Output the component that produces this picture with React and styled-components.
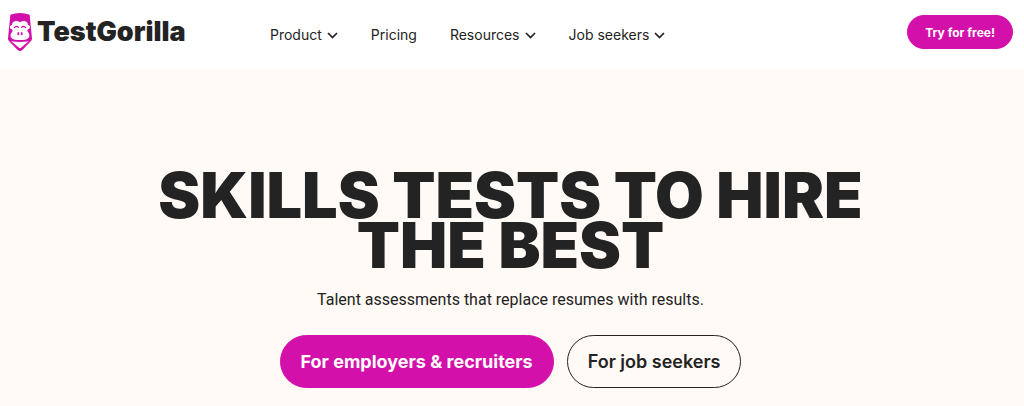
import styled, { createGlobalStyle } from 'styled-components'

const GlobalStyle = createGlobalStyle`
  * {
    box-sizing: border-box;
  }

  body {
    margin: 0;
    min-height: 100vh;
    background: #fffaf6;
    color: #232323;
    font-family: Inter, "Liberation Sans", sans-serif;
  }
`

const Header = styled.header`
  display: flex;
  align-items: center;
  height: 69px;
  padding: 0 11px 5px 8px;
  background: #fff;
`

const Brand = styled.a`
  display: flex;
  align-items: center;
  gap: 5px;
  width: 262px;
  color: #232323;
  font-size: 27px;
  font-weight: 900;
  line-height: 38px;
  text-decoration: none;

  svg {
    flex: none;
  }
`

const Nav = styled.nav`
  display: flex;
  align-items: center;
  gap: 33px;
  margin-right: auto;
  padding-top: 5px;
`

const NavItem = styled.button`
  display: flex;
  align-items: center;
  gap: 5px;
  padding: 0;
  border: 0;
  background: none;
  color: #232323;
  font: 400 14px/20px Inter, "Liberation Sans", sans-serif;
  text-decoration: none;
  cursor: pointer;
`

const PillLink = styled.a`
  display: flex;
  align-items: center;
  justify-content: center;
  height: ${({ $small }) => ($small ? '34px' : '53px')};
  padding: 0 ${({ $small }) => ($small ? '17px' : '20px')};
  border: 1px solid ${({ $outline }) => ($outline ? '#232323' : '#d410aa')};
  border-radius: 27px;
  background: ${({ $outline }) => ($outline ? 'transparent' : '#d410aa')};
  color: ${({ $outline }) => ($outline ? '#232323' : '#fff')};
  font-size: ${({ $small }) => ($small ? '12px' : '18px')};
  font-weight: ${({ $outline }) => ($outline ? 600 : 700)};
  text-decoration: none;
  white-space: nowrap;
`

const Hero = styled.main`
  display: flex;
  flex-direction: column;
  align-items: center;
  padding: 101px 16px 18px 13px;
  text-align: center;
`

const Title = styled.h1`
  max-width: 760px;
  margin: 0;
  font-size: 63px;
  font-weight: 900;
  line-height: 50px;
  text-transform: uppercase;
`

const Subtitle = styled.p`
  margin: 18px 0 23px;
  font-family: Roboto, "Liberation Sans", sans-serif;
  font-size: 16px;
  line-height: 24px;
`

const Actions = styled.div`
  display: flex;
  flex-wrap: wrap;
  justify-content: center;
  gap: 13px;
`

function GorillaMark() {
  return (
    <svg width="24" height="38" viewBox="0 0 72 114" aria-hidden="true">
      <path
        d="M7 5Q36-5 65 5L72 77Q72 81 69 84L44 110Q36 118 28 110L3 84Q0 81 0 77Z"
        fill="#d410aa"
      />
      <path
        d="M36 28C26 20 12 24 12 36C4 36 4 48 12 49C14 52 15 54 12 57C4 66 7 78 21 80Q36 82 51 80C65 78 68 66 60 57C57 54 58 52 60 49C68 48 68 36 60 36C60 24 46 20 36 28Z"
        fill="#fff"
      />
      <path
        d="M19 44Q25 37 31 43M41 43Q47 37 53 44"
        fill="none"
        stroke="#d410aa"
        strokeWidth="4"
        strokeLinecap="round"
      />
      <ellipse cx="31" cy="62" rx="3" ry="5" fill="#d410aa" />
      <ellipse cx="41" cy="62" rx="3" ry="5" fill="#d410aa" />
      <path d="M10 85Q36 89 62 85L39 104Q36 106 33 104Z" fill="#fff" />
    </svg>
  )
}

function Chevron() {
  return (
    <svg width="11" height="8" viewBox="0 0 11 8" aria-hidden="true">
      <path d="M1 2L5.5 6.5L10 2" fill="none" stroke="#232323" strokeWidth="1.7" />
    </svg>
  )
}

const navItems = [
  { label: 'Product', menu: true },
  { label: 'Pricing' },
  { label: 'Resources', menu: true },
  { label: 'Job seekers', menu: true },
]

export default function App() {
  return (
    <>
      <GlobalStyle />
      <Header>
        <Brand href="#">
          <GorillaMark />
          TestGorilla
        </Brand>
        <Nav>
          {navItems.map(({ label, menu }) => {
            if (!menu) return <NavItem as="a" href="#" key={label}>{label}</NavItem>
            return (
              <NavItem type="button" aria-haspopup="true" key={label}>
                {label}
                <Chevron />
              </NavItem>
            )
          })}
        </Nav>
        <PillLink href="#" $small>Try for free!</PillLink>
      </Header>
      <Hero>
        <Title>Skills tests to hire the best</Title>
        <Subtitle>Talent assessments that replace resumes with results.</Subtitle>
        <Actions>
          <PillLink href="#">For employers &amp; recruiters</PillLink>
          <PillLink href="#" $outline>For job seekers</PillLink>
        </Actions>
      </Hero>
    </>
  )
}
